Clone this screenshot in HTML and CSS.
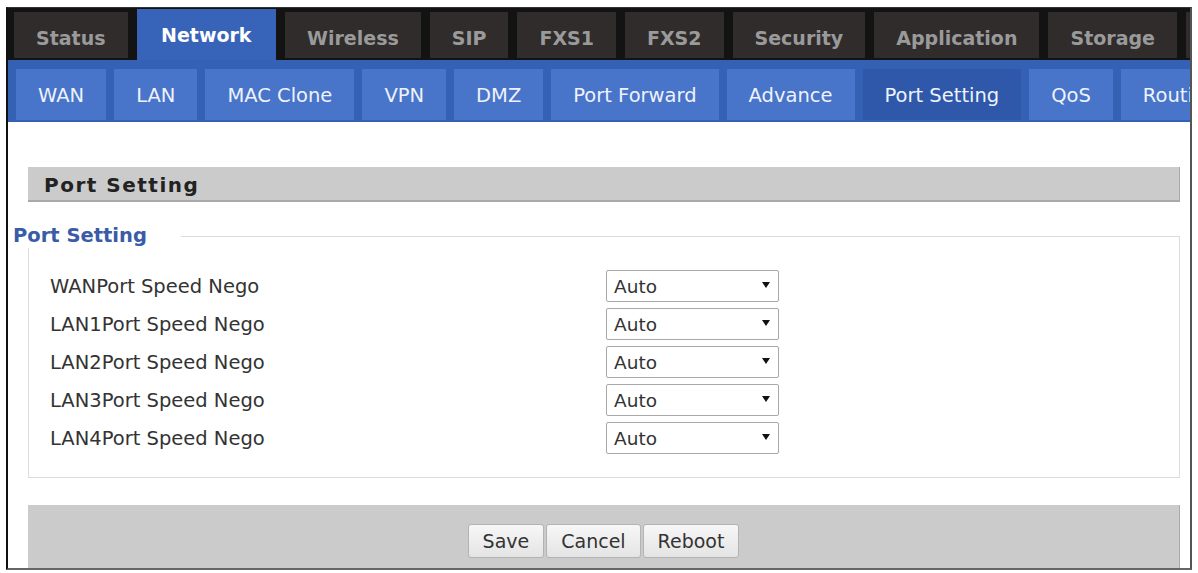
FILE: index.html
```html
<!DOCTYPE html>
<html lang="en">
<head>
<meta charset="utf-8">
<title>Network - Port Setting</title>
<link rel="stylesheet" href="styles.css">
</head>
<body>
<div class="frame">
  <nav class="topbar">
    <span class="tab">Status</span>
    <span class="tab active">Network</span>
    <span class="tab">Wireless</span>
    <span class="tab">SIP</span>
    <span class="tab">FXS1</span>
    <span class="tab">FXS2</span>
    <span class="tab">Security</span>
    <span class="tab">Application</span>
    <span class="tab">Storage</span>
    <span class="tab tab-stub"></span>
  </nav>
  <nav class="subbar">
    <span class="subtab">WAN</span>
    <span class="subtab">LAN</span>
    <span class="subtab">MAC Clone</span>
    <span class="subtab">VPN</span>
    <span class="subtab">DMZ</span>
    <span class="subtab">Port Forward</span>
    <span class="subtab">Advance</span>
    <span class="subtab active">Port Setting</span>
    <span class="subtab">QoS</span>
    <span class="subtab">Routing</span>
  </nav>
  <main class="content">
    <div class="section-head">Port Setting</div>
    <fieldset class="group">
      <legend>Port Setting</legend>
      <div class="rows">
        <div class="row">
          <label class="label">WANPort Speed Nego</label>
          <span class="select-wrap"><select class="select"><option>Auto</option></select><svg class="arrow" viewBox="0 0 8 6"><polygon points="0,0 8,0 4,6"/></svg></span>
        </div>
        <div class="row">
          <label class="label">LAN1Port Speed Nego</label>
          <span class="select-wrap"><select class="select"><option>Auto</option></select><svg class="arrow" viewBox="0 0 8 6"><polygon points="0,0 8,0 4,6"/></svg></span>
        </div>
        <div class="row">
          <label class="label">LAN2Port Speed Nego</label>
          <span class="select-wrap"><select class="select"><option>Auto</option></select><svg class="arrow" viewBox="0 0 8 6"><polygon points="0,0 8,0 4,6"/></svg></span>
        </div>
        <div class="row">
          <label class="label">LAN3Port Speed Nego</label>
          <span class="select-wrap"><select class="select"><option>Auto</option></select><svg class="arrow" viewBox="0 0 8 6"><polygon points="0,0 8,0 4,6"/></svg></span>
        </div>
        <div class="row">
          <label class="label">LAN4Port Speed Nego</label>
          <span class="select-wrap"><select class="select"><option>Auto</option></select><svg class="arrow" viewBox="0 0 8 6"><polygon points="0,0 8,0 4,6"/></svg></span>
        </div>
      </div>
    </fieldset>
    <div class="actions">
      <button class="btn">Save</button>
      <button class="btn">Cancel</button>
      <button class="btn">Reboot</button>
    </div>
  </main>
</div>
</body>
</html>
```

FILE: styles.css
```css
* { box-sizing: border-box; }
html, body { margin: 0; padding: 0; background: #fff; }
body { font-family: "DejaVu Sans", Verdana, sans-serif; }

.frame {
  margin: 7px 0 0 6px;
  width: 1186px;
  height: 563px;
  border-top: 1px solid #333;
  border-left: 2px solid #111;
  border-right: 2px solid #555;
  border-bottom: 2px solid #666;
  overflow: hidden;
  display: flex;
  flex-direction: column;
}

.topbar {
  flex: none;
  height: 52px;
  background: #131313;
  display: flex;
  align-items: flex-end;
  gap: 9px;
  padding-left: 6px;
  overflow: hidden;
  white-space: nowrap;
}
.tab {
  flex: none;
  height: 46px;
  margin-bottom: 2px;
  padding: 6px 22px 0;
  line-height: 40px;
  background: #2f2c2b;
  color: #9a9a9a;
  font-weight: bold;
  font-size: 19px;
}
.tab.active {
  height: 51px;
  margin-bottom: 0;
  padding: 6px 24.5px 5px;
  background: #3763b8;
  color: #fff;
}
.tab-stub { width: 60px; }

.subbar {
  flex: none;
  height: 62px;
  background: #3561b4;
  display: flex;
  gap: 8px;
  padding: 9px 0 2px 8px;
  overflow: hidden;
  white-space: nowrap;
}
.subtab {
  flex: none;
  height: 51px;
  padding: 2px 22px 0;
  line-height: 49px;
  background: #4874ca;
  color: #eef2fb;
  font-size: 19.5px;
}
.subtab.active { background: #2f58aa; }

.content {
  flex: 1;
  padding: 45px 10px 0 20px;
}

.section-head {
  height: 35px;
  background: #cbcbcb;
  border-right: 1px solid #aaa;
  border-bottom: 2px solid #a9a9a9;
  padding: 4px 0 0 16px;
  line-height: 29px;
  font-weight: bold;
  font-size: 20px;
  letter-spacing: 1.5px;
  color: #222;
}

.group {
  margin: 22px 0 0;
  padding: 22px 0 23px 21px;
  border: 1px solid #dcdcdc;
  min-width: 0;
}
.group legend {
  margin-left: -37px;
  padding: 0 34px 0 0;
  background: #fff;
  color: #3a5ca6;
  font-weight: bold;
  font-size: 19.5px;
  line-height: 24px;
}

.rows { display: flex; flex-direction: column; gap: 6px; }
.row { display: flex; align-items: center; height: 32px; }
.label { width: 556px; font-size: 19.5px; color: #333; }

.select-wrap { position: relative; display: block; width: 173px; height: 32px; }
.select {
  appearance: none;
  -webkit-appearance: none;
  width: 100%;
  height: 100%;
  margin: 0;
  border: 1px solid #a8a8a8;
  border-radius: 2px;
  background: #fff;
  padding: 0 0 0 7px;
  font-family: "DejaVu Sans", Verdana, sans-serif;
  font-size: 18.5px;
  color: #333;
}
.arrow {
  position: absolute;
  right: 9px;
  top: 12px;
  width: 8px;
  height: 6px;
  fill: #111;
  pointer-events: none;
}

.actions {
  margin-top: 27px;
  height: 63px;
  background: #cbcbcb;
  border-right: 1px solid #aaa;
  display: flex;
  justify-content: center;
  align-items: flex-start;
  gap: 2px;
  padding-top: 19px;
}
.btn {
  height: 34px;
  margin: 0;
  padding: 0 14px;
  font-family: "DejaVu Sans", Verdana, sans-serif;
  font-size: 19px;
  color: #333;
  border: 1px solid #b3b3b3;
  border-radius: 3px;
  background: linear-gradient(#f7f7f7, #e4e4e4);
}
```
